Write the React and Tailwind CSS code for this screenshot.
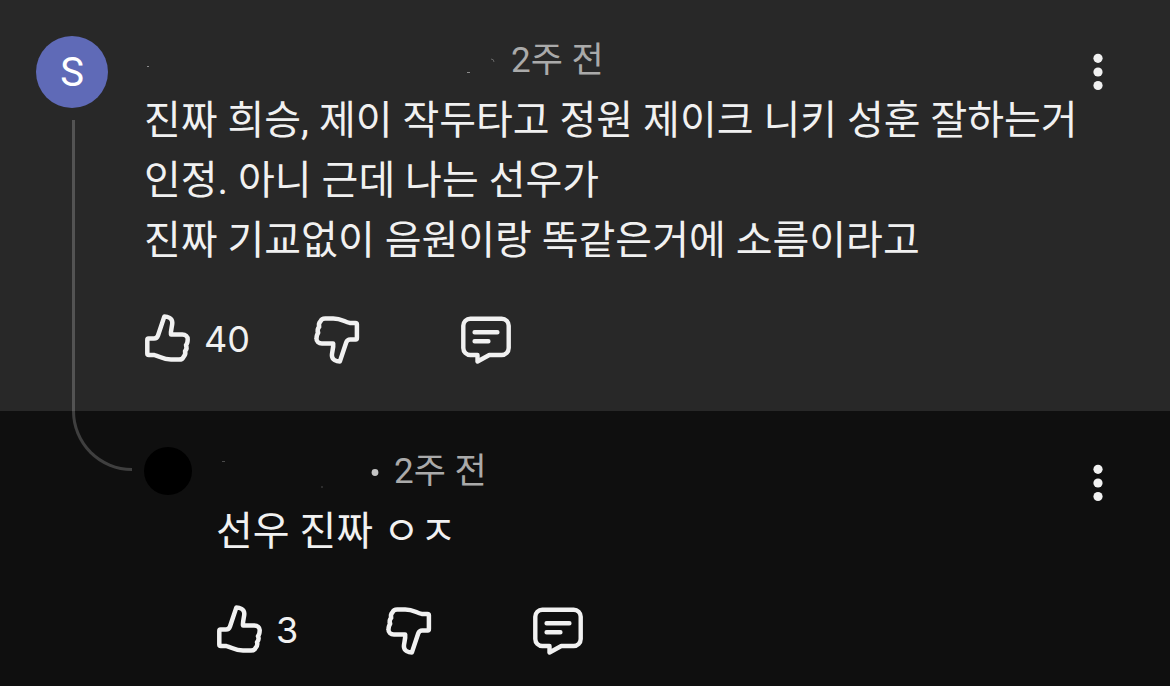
import clsx from "clsx";

const comments = [
  {
    id: 1,
    initial: "S",
    time: "2주 전",
    lines: [
      "진짜 희승, 제이 작두타고 정원 제이크 니키 성훈 잘하는거 인정. 아니 근데 나는 선우가",
      "진짜 기교없이 음원이랑 똑같은거에 소름이라고",
    ],
    likes: 40,
  },
  {
    id: 2,
    time: "2주 전",
    lines: ["선우 진짜 ㅇㅈ"],
    likes: 3,
    isReply: true,
  },
];

const THUMB_PATH =
  "M4.5 25.5H10C12 25.5 13.3 24.5 14 22.5L20.3 3.6C23.5 3.6 28.3 5 28.3 9.8C28.3 12.8 26.5 17.5 27 21.6H38.3C41.5 21.6 43.9 23.5 43.7 26.5C43.6 29 43.4 30.8 42 32.2C43 34.2 42.7 36.3 41 38.2C41.7 40.5 41 42.4 39.6 43.8C38.8 45.8 37.3 46.6 35 46.6H27C19 46.6 16 43.3 10.5 42.1H4.8C3.7 42.1 3.3 41.6 3.3 40.6V27C3.3 26 3.7 25.5 4.5 25.5Z";

function Thumb({ down }) {
  return (
    <svg
      className="w-12 h-[52px] shrink-0"
      viewBox="0 0 48 52"
      fill="none"
      stroke="currentColor"
      strokeWidth="4.5"
      strokeLinejoin="round"
    >
      <path d={THUMB_PATH} transform={down ? "rotate(180 23.6 26)" : undefined} />
    </svg>
  );
}

function ReplyIcon() {
  return (
    <svg
      className="w-[52px] h-[52px]"
      viewBox="0 0 52 52"
      fill="none"
      stroke="currentColor"
      strokeWidth="4.4"
      strokeLinejoin="round"
      strokeLinecap="round"
    >
      <path d="M10.3 5.7H41.7A7 7 0 0 1 48.7 12.7V35A7 7 0 0 1 41.7 42H29.3L17.5 48.5V42H10.3A7 7 0 0 1 3.3 35V12.7A7 7 0 0 1 10.3 5.7Z" />
      <path d="M14.6 19.3H37.4M14.6 28.3H28.4" />
    </svg>
  );
}

function Dots() {
  return (
    <svg className="w-3 h-10" viewBox="0 0 12 40" fill="currentColor">
      <circle cx="6" cy="6.3" r="4.6" />
      <circle cx="6" cy="20" r="4.6" />
      <circle cx="6" cy="33.5" r="4.6" />
    </svg>
  );
}

// blanked out user name, only a few specks are left of it
function HiddenName({ isReply }) {
  if (isReply) {
    return (
      <svg className="w-[178px] h-12 shrink-0" viewBox="0 0 178 48">
        <path d="M6 14.5h3M105 40h2" stroke="#4a4a4a" />
        <circle cx="159" cy="25.5" r="3.4" fill="#c4c4c4" />
      </svg>
    );
  }
  return (
    <svg className="w-[367px] h-12 shrink-0" viewBox="0 0 367 48" fill="none">
      <path d="M3 30.5h2M323 36.5h3" stroke="#8a8a8a" />
      <path d="M347 23q3 0 3 3" stroke="#666" />
    </svg>
  );
}

function Comment({ comment }) {
  const { initial, time, lines, likes, isReply } = comment;

  return (
    <article
      className={clsx(
        "flex pr-12",
        isReply ? "grow bg-[#0f0f0f] pl-[72px]" : "bg-[#282828] pl-9"
      )}
    >
      {isReply ? (
        <div className="flex shrink-0 gap-3 mr-6">
          <div className="w-[60px] h-[60px] border-l-3 border-b-3 border-white/20 rounded-bl-[60px]" />
          <div className="w-12 h-12 mt-9 rounded-full bg-black" />
        </div>
      ) : (
        <div className="flex flex-col shrink-0 items-center gap-3 pt-9 mr-9">
          <div className="flex items-center justify-center w-[72px] h-[72px] pt-[2px] rounded-full bg-[#5f6ab7] text-white text-[40px]">
            {initial}
          </div>
          <div className="grow w-[3px] ml-[3px] bg-white/20" />
        </div>
      )}
      <div className="grow min-w-0 pt-9 pb-[46px]">
        <header className="flex h-12 items-start">
          <HiddenName isReply={isReply} />
          <time className="text-[35px] leading-[50px] text-[#aaaaaa]">{time}</time>
          <button
            type="button"
            aria-label="메뉴"
            className="flex items-center justify-center w-12 h-[72px] ml-auto"
          >
            <Dots />
          </button>
        </header>
        <div className="mt-[7px] text-[40px] leading-[60px] break-keep">
          {lines.map((line) => (
            <p key={line}>{line}</p>
          ))}
        </div>
        <div className="flex mt-[42px]">
          <button
            type="button"
            aria-label="좋아요"
            className="flex items-center gap-3 w-[169px] font-[Inter,sans-serif] text-[36px] leading-[52px]"
          >
            <Thumb />
            <span>{likes}</span>
          </button>
          <button type="button" aria-label="싫어요" className="w-[147px]">
            <Thumb down />
          </button>
          <button type="button" aria-label="답글">
            <ReplyIcon />
          </button>
        </div>
      </div>
    </article>
  );
}

export default function App() {
  return (
    <main className="flex flex-col min-h-screen bg-[#0f0f0f] text-[#f1f1f1] font-[Roboto,'Noto_Sans_CJK_KR',sans-serif]">
      {comments.map((comment) => (
        <Comment key={comment.id} comment={comment} />
      ))}
    </main>
  );
}
